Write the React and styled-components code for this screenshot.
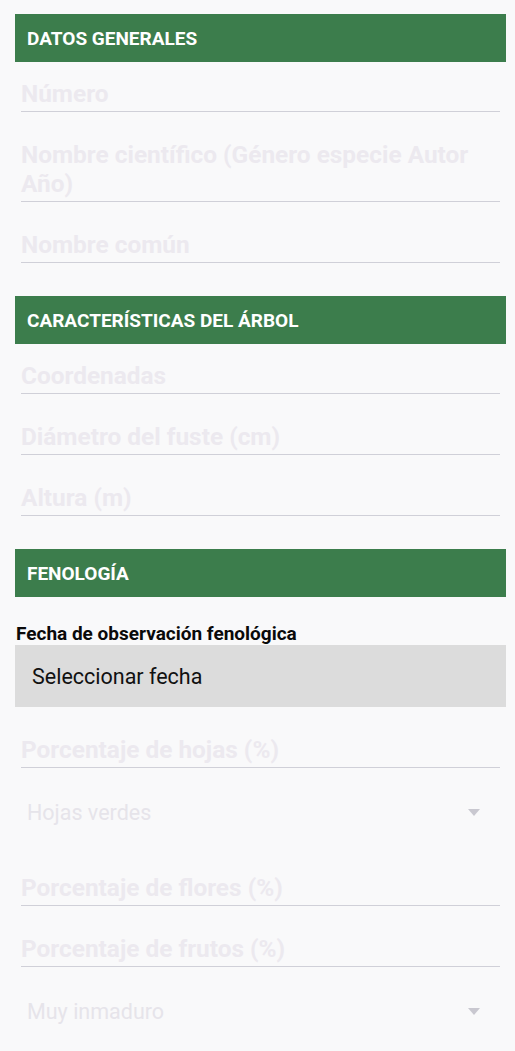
import React from "react";
import styled, { createGlobalStyle } from "styled-components";

const Global = createGlobalStyle`
  html, body { margin: 0; padding: 0; background: #f9f9fa; }
  body { font-family: Roboto, "Noto Sans", "Liberation Sans", sans-serif; }
`;

const Page = styled.div`
  padding: 14px 9px 7px 15px;
  background: #f9f9fa;
  min-height: 1051px;
  box-sizing: border-box;
`;

const Section = styled.section`
  display: flex;
  flex-direction: column;
  & + & { margin-top: 33px; }
`;

const Header = styled.div`
  height: 48px;
  background: #3c7d4c;
  color: #ffffff;
  font-weight: 700;
  font-size: 19px;
  display: flex;
  align-items: center;
  padding-left: 12px;
`;

const Field = styled.div`
  margin: 0 6px;
  padding: 17px 0 3px;
  line-height: 29px;
  font-size: 24.4px;
  font-weight: 700;
  color: #ece9ef;
  border-bottom: 1px solid #d0d0d8;
  margin-top: ${(p) => (p.$gap ? "11px" : "0")};
  & + & { margin-top: 11px; }
`;

const Label = styled.div`
  margin-top: 26px;
  line-height: 22px;
  font-size: 19px;
  font-weight: 700;
  color: #0a0a0a;
  padding-left: 1px;
`;

const DateButton = styled.div`
  height: 62px;
  background: #dcdcdc;
  display: flex;
  align-items: center;
  padding-left: 17px;
  font-size: 21.5px;
  color: #111111;
`;

const Picker = styled.div`
  margin-top: 11px;
  height: 66px;
  display: flex;
  align-items: center;
  justify-content: space-between;
  padding: 0 26px 0 12px;
  font-size: 21.5px;
  color: #e6e4ea;
`;

const Arrow = () => (
  <svg width="12" height="7" viewBox="0 0 12 7">
    <path d="M0 0 L12 0 L6 7 Z" fill="#c9c8d0" />
  </svg>
);

export default function App() {
  return (
    <>
      <Global />
      <Page>
        <Section>
          <Header>DATOS GENERALES</Header>
          <Field>Número</Field>
          <Field>Nombre científico (Género especie Autor Año)</Field>
          <Field>Nombre común</Field>
        </Section>
        <Section>
          <Header>CARACTERÍSTICAS DEL ÁRBOL</Header>
          <Field>Coordenadas</Field>
          <Field>Diámetro del fuste (cm)</Field>
          <Field>Altura (m)</Field>
        </Section>
        <Section>
          <Header>FENOLOGÍA</Header>
          <Label>Fecha de observación fenológica</Label>
          <DateButton>Seleccionar fecha</DateButton>
          <Field $gap>Porcentaje de hojas (%)</Field>
          <Picker>
            <span>Hojas verdes</span>
            <Arrow />
          </Picker>
          <Field $gap>Porcentaje de flores (%)</Field>
          <Field>Porcentaje de frutos (%)</Field>
          <Picker>
            <span>Muy inmaduro</span>
            <Arrow />
          </Picker>
        </Section>
      </Page>
    </>
  );
}
